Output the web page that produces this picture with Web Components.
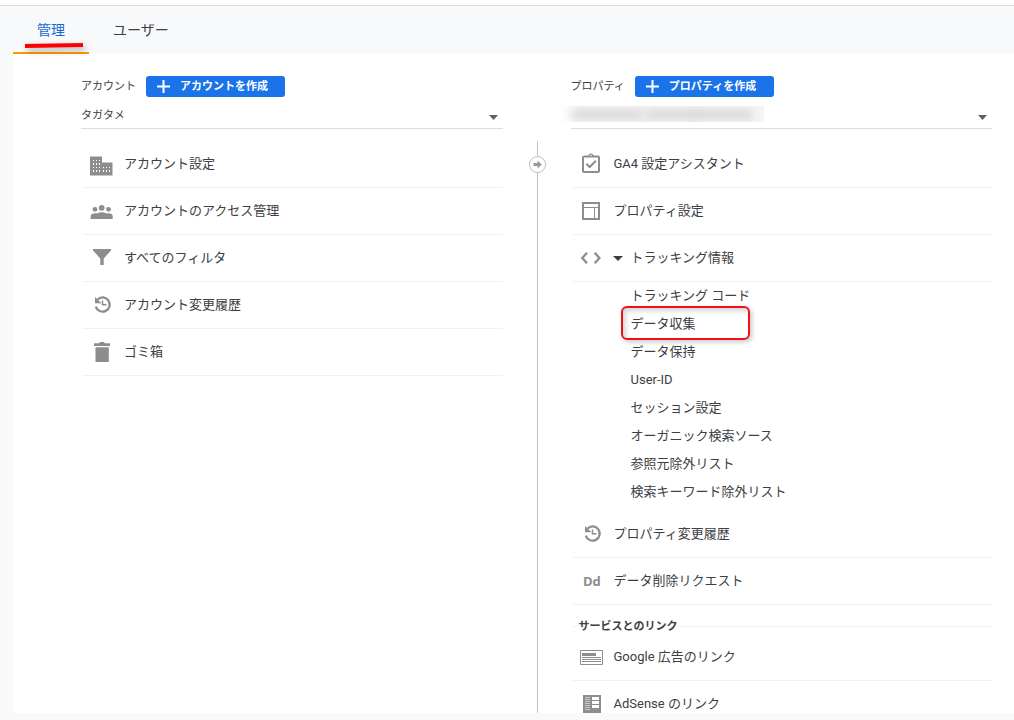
<!DOCTYPE html>
<html lang="ja">
<head>
<meta charset="utf-8">
<meta name="viewport" content="width=device-width, initial-scale=1">
<title>管理</title>
<style>
  html, body { margin: 0; height: 100%; }
  body {
    background: #f8f9fb;
    color: #3c4043;
    font-family: Roboto, "Noto Sans CJK JP", sans-serif;
    font-size: 13px;
  }
</style>
</head>
<body>
<admin-app>
  <admin-tabs slot="tabs"></admin-tabs>
  <admin-column heading="アカウント" action="アカウントを作成" value="タガタメ">
    <admin-item icon="building">アカウント設定</admin-item>
    <admin-item icon="people">アカウントのアクセス管理</admin-item>
    <admin-item icon="filter">すべてのフィルタ</admin-item>
    <admin-item icon="history">アカウント変更履歴</admin-item>
    <admin-item icon="trash">ゴミ箱</admin-item>
  </admin-column>
  <admin-divider></admin-divider>
  <admin-column heading="プロパティ" action="プロパティを作成" redacted>
    <admin-item icon="clipboard">GA4 設定アシスタント</admin-item>
    <admin-item icon="layout">プロパティ設定</admin-item>
    <admin-item icon="code" expanded>トラッキング情報</admin-item>
    <admin-sublist>
      <admin-subitem>トラッキング コード</admin-subitem>
      <admin-subitem marked>データ収集</admin-subitem>
      <admin-subitem>データ保持</admin-subitem>
      <admin-subitem>User-ID</admin-subitem>
      <admin-subitem>セッション設定</admin-subitem>
      <admin-subitem>オーガニック検索ソース</admin-subitem>
      <admin-subitem>参照元除外リスト</admin-subitem>
      <admin-subitem>検索キーワード除外リスト</admin-subitem>
    </admin-sublist>
    <admin-item icon="history">プロパティ変更履歴</admin-item>
    <admin-item icon="dd">データ削除リクエスト</admin-item>
    <admin-section>サービスとのリンク</admin-section>
    <admin-item icon="ads">Google 広告のリンク</admin-item>
    <admin-item icon="adsense">AdSense のリンク</admin-item>
  </admin-column>
</admin-app>

<script>
const define = (name, render) => customElements.define(name, class extends HTMLElement {
  connectedCallback() {
    if (this.shadowRoot) return;
    this.attachShadow({ mode: "open" }).innerHTML = render(this);
  }
});

const ICONS = {
  building: `<path d="M1 4.500h12v6h10.500v13H1z"/><g fill="#fff"><path d="M4 8h1v1H4zM7 8h1v1H7zM10 8h1v1h-1zM4 11h1v2H4zM7 11h1v2H7zM10 11h1v2h-1zM4 15h1v1H4zM7 15h1v1H7zM10 15h1v1h-1zM4 18h1v2H4zM7 18h1v2H7zM10 18h1v2h-1zM14 15h1v1h-1zM17 15h1v1h-1zM20 15h1v1h-1zM14 18h1v2h-1zM17 18h1v2h-1zM20 18h1v2h-1z"/></g>`,
  people: `<circle cx="6" cy="10.3" r="2.4"/><circle cx="12.7" cy="8.8" r="2.9"/><circle cx="19.5" cy="10.3" r="2.4"/><path d="M1.7 20v-3c0-2 2-2.8 4.5-2.8.8 0 1.300.1 2 .3 1.200-.8 2.700-1.200 4.500-1.200s3.300.4 4.500 1.200c.7-.2 1.200-.3 2-.3 2.500 0 4.500.8 4.500 2.800v3z"/>`,
  filter: `<path d="M4 3h18v1.500l-7.300 8V19h-3.400v-6.500L4 4.500z"/>`,
  history: `<path d="M8.500 6.600a7.100 7.100 0 1 1-1.700 7" fill="none" stroke="#8d8d8d" stroke-width="2.300"/><path d="M6 4v6.200h6.500L10 8z"/><path d="M13.500 7.500v4.200h4" fill="none" stroke="#8d8d8d" stroke-width="1.500"/>`,
  trash: `<path d="M5 3.300h5.200L11 2h4l.8 1.300H21V6H5zM6.500 7.200h13.300V22H6.500z"/>`,
  clipboard: `<g fill="none" stroke="#8d8d8d"><rect x="4" y="4.500" width="16" height="15.500" rx="1" stroke-width="2"/><path d="M7.300 11.800l3.300 3.200 6.300-6.300" stroke-width="2"/></g><path d="M8.500 4c.6 0 1-.5 1.500-1.500C10.700 1 13.300 1 14 2.500c.5 1 .9 1.500 1.500 1.500v1h-7z"/><circle cx="12" cy="3.500" r=".8" fill="#fff"/>`,
  layout: `<g fill="none" stroke="#8d8d8d"><rect x="4" y="4" width="16" height="16" stroke-width="2"/><path d="M4 8.500h16M15.500 9v11" stroke-width="1"/></g>`,
  code: `<g fill="none" stroke="#8d8d8d" stroke-width="2.300"><path d="M8 6.800L3.300 12 8 17.200M15.700 6.800l4.700 5.200-4.700 5.200"/></g>`,
  dd: `<text x="4" y="17" font-size="13" font-weight="700" font-family="Open Sans, sans-serif">Dd</text>`,
  ads: `<path d="M1.500 5.500h22v14h-22z" fill="none" stroke="#8d8d8d"/><path d="M3 8h14v3H3zM3 12h19v1H3zM3 14h19v1H3zM3 16h19v1H3z"/>`,
  adsense: `<path d="M4 3h18v18H4z"/><path d="M6 5h5v1H6zM6 7h5v1H6zM6 9h5v1H6zM6 11h5v1H6zM6 13h5v1H6zM6 15h5v1H6zM6 17h5v1H6z" fill="#ccc"/><path d="M13 5h7v3h-7zM13 9h7v3h-7zM13 13h7v3h-7z" fill="#fff"/>`
};

define("admin-icon", el => `
  <style>
    :host { display: block; flex: none; width: 24px; height: 24px; }
    svg { display: block; overflow: visible; }
  </style>
  <svg width="24" height="24" viewBox="0 0 24 24" fill="#8d8d8d" aria-hidden="true">${ICONS[el.getAttribute("name")]}</svg>`);

define("admin-app", () => `
  <style>
    :host { display: flex; flex-direction: column; height: 100vh; box-sizing: border-box; border-top: 5px solid #fff; padding-bottom: 7px; }
    header { border-top: 1px solid #dadce0; padding-left: 13px; }
    main {
      flex: 1; min-height: 0; overflow: hidden;
      display: grid; grid-template-columns: minmax(0, 1fr) 68px minmax(0, 1fr);
      margin-left: 13px; padding: 22px 22px 0 68px; background: #fff;
    }
  </style>
  <header><slot name="tabs"></slot></header>
  <main><slot></slot></main>`);

define("admin-tabs", () => `
  <style>
    :host { display: block; }
    nav { display: flex; }
    button {
      position: relative; height: 48px; padding: 2px 24px 0; border: 0; border-bottom: 2px solid transparent;
      background: none; color: #3c4043; font: inherit; font-size: 14px; line-height: 20px; cursor: pointer;
    }
    button[aria-selected="true"] { color: #1967d2; border-color: #ff9800; }
    svg { position: absolute; left: 12px; bottom: 3px; overflow: visible; filter: drop-shadow(2px 3px 3px rgba(0,0,0,.35)); }
  </style>
  <nav role="tablist">
    <button role="tab" aria-selected="true">管理<svg width="58" height="8" aria-hidden="true"><path d="M0 5l28-.5 30-.5" stroke="#f00" stroke-width="4" fill="none"/></svg></button>
    <button role="tab" aria-selected="false">ユーザー</button>
  </nav>`);

define("admin-column", el => `
  <style>
    :host { display: block; min-width: 0; }
    .head { display: flex; align-items: center; gap: 10px; height: 21px; font-size: 11px; line-height: 16px; }
    button {
      display: flex; align-items: center; gap: 10px; min-width: 139px; height: 21px; padding: 0 11px;
      border: 0; border-radius: 3px; background: #1a73e8; color: #fff;
      font: inherit; font-weight: 700; cursor: pointer;
    }
    .pick { position: relative; margin-top: 5px; border-bottom: 1px solid #dadce0; }
    select {
      display: block; width: 100%; height: 26px; padding: 0; border: 0; appearance: none;
      background: none; color: #3c4043; font: inherit; font-size: 11px;
    }
    .arrow { position: absolute; right: 5px; top: 13px; }
    .blur { position: absolute; left: -13px; top: 4px; width: 206px; height: 16px; overflow: hidden; background: linear-gradient(90deg, #fff, #f4f4f4 12%, #f4f4f4); }
    .blur i { position: absolute; top: 4px; height: 9px; background: #d6d6d6; filter: blur(4px); }
    .list { padding-top: 12px; }
  </style>
  <div class="head">
    <label for="pick">${el.getAttribute("heading")}</label>
    <button type="button"><svg width="13" height="13" aria-hidden="true"><path d="M6.500 0v13M0 6.500h13" stroke="#fff" stroke-width="2"/></svg>${el.getAttribute("action")}</button>
  </div>
  <div class="pick">
    <select id="pick"><option>${el.getAttribute("value") || ""}</option></select>
    ${el.hasAttribute("redacted") ? `<div class="blur"><i style="left:14px;width:70px"></i><i style="left:88px;width:50px"></i><i style="left:134px;width:60px"></i></div>` : ""}
    <svg class="arrow" width="9" height="5" aria-hidden="true"><path d="M0 0h9L4.500 5z" fill="#5f6063"/></svg>
  </div>
  <div class="list"><slot></slot></div>`);

define("admin-item", el => `
  <style>
    :host { display: block; margin-left: 2px; border-bottom: 1px solid #f1f1f1; }
    a { display: flex; align-items: center; height: 46px; padding-left: 6px; color: inherit; text-decoration: none; line-height: 20px; }
    .text { padding-left: 11px; white-space: nowrap; }
    .caret { margin-left: 10px; }
    .caret + .text { padding-left: 8px; }
  </style>
  <a href="#"><admin-icon name="${el.getAttribute("icon")}"></admin-icon>${el.hasAttribute("expanded") ? `<svg class="caret" width="10" height="5" aria-hidden="true"><path d="M0 0h10L5 5z" fill="#3c4043"/></svg>` : ""}<span class="text"><slot></slot></span></a>`);

define("admin-sublist", () => `
  <style>:host { display: block; padding: 0 0 5px 60px; }</style>
  <slot></slot>`);

define("admin-subitem", el => `
  <style>
    :host { display: block; position: relative; height: 28px; line-height: 28px; }
    a { color: inherit; text-decoration: none; }
    .mark {
      position: absolute; left: -10px; top: -4px; width: 125px; height: 30px;
      border: 2px solid #ee1118; border-radius: 6px; pointer-events: none;
      box-shadow: 2px 2px 5px rgba(0,0,0,.22), inset 3px 3px 5px rgba(0,0,0,.16);
    }
  </style>
  <a href="#"><slot></slot></a>${el.hasAttribute("marked") ? `<div class="mark"></div>` : ""}`);

define("admin-section", () => `
  <style>
    :host { display: flex; align-items: center; margin-left: 2px; padding-top: 14px; height: 15px; font-size: 11px; font-weight: 700; line-height: 15px; }
    :host::before, :host::after { content: ""; height: 1px; background: #f1f1f1; }
    :host::before { width: 6px; }
    :host::after { flex: 1; }
    h3 { margin: 0; font: inherit; }
  </style>
  <h3><slot></slot></h3>`);

define("admin-divider", () => `
  <style>
    :host { display: flex; flex-direction: column; align-items: center; padding: 65px 0 0 2px; }
    i { width: 1px; background: #c4c4c4; height: 15px; }
    i:last-child { flex: 1; }
    svg { display: block; }
  </style>
  <i></i>
  <svg width="17" height="17" aria-hidden="true"><circle cx="8.500" cy="8.500" r="8" fill="#fff" stroke="#bdbdbd"/><path d="M4.500 7h4V4.500l4.300 4-4.300 4V10h-4z" fill="#999"/></svg>
  <i></i>`);
</script>
</body>
</html>
